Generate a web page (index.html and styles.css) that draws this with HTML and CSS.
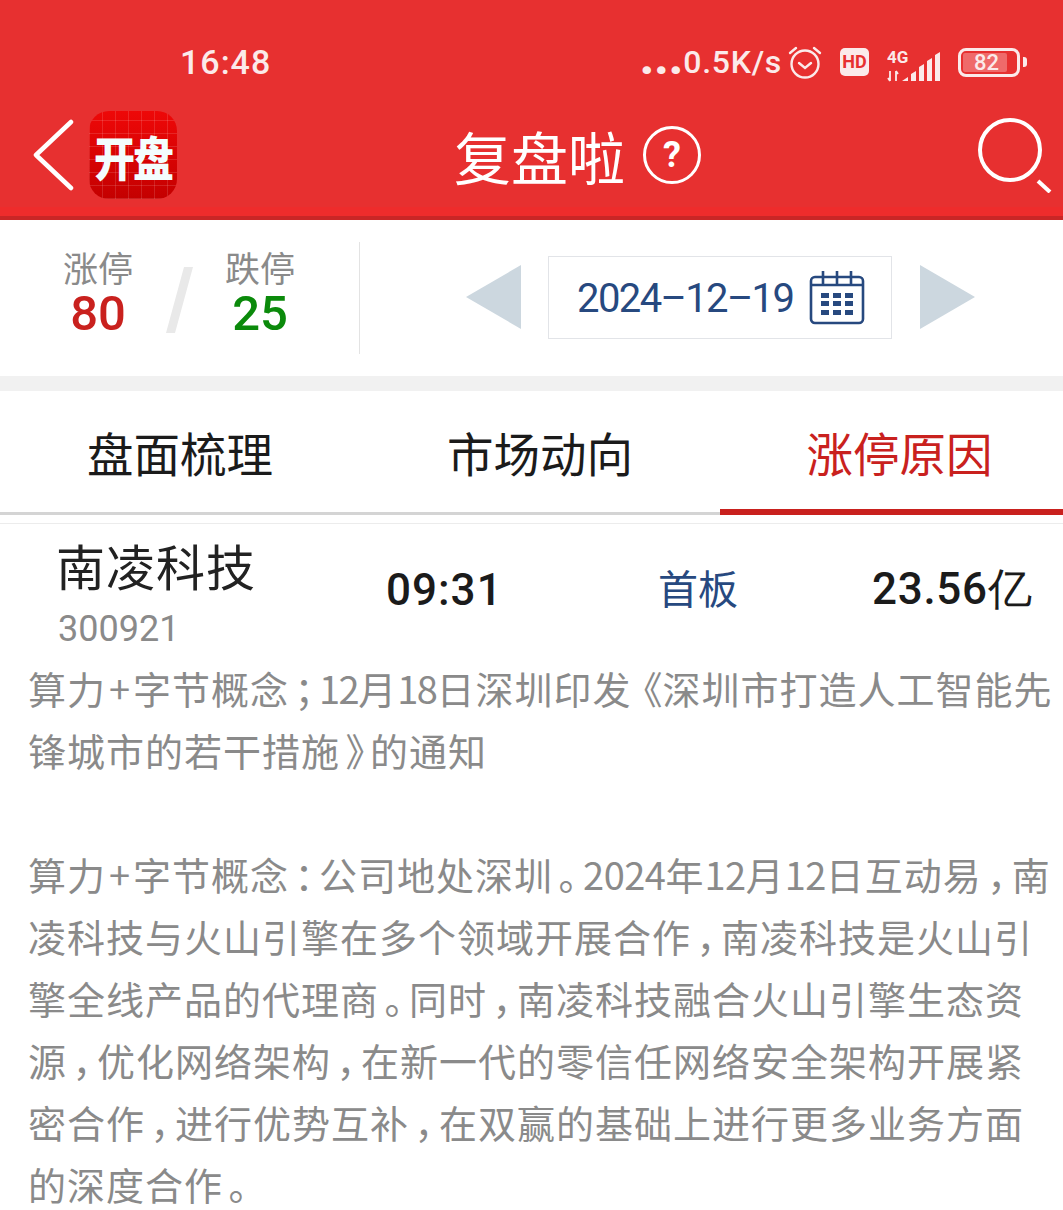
FILE: index.html
```html
<!DOCTYPE html>
<html lang="zh">
<head>
<meta charset="utf-8">
<title>复盘啦</title>
<link rel="stylesheet" href="styles.css">
</head>
<body>
<header class="header">
  <div class="status">
    <span class="time">16:48</span>
    <div class="status-right">
      <span class="dots">...</span><span class="speed">0.5K/s</span>
      <svg class="ic-alarm" width="36" height="36" viewBox="0 0 36 36" fill="none" stroke="#fbeaea" stroke-width="2.4" stroke-linecap="round"><circle cx="18" cy="20" r="13.5"/><path d="M12 19l6 5 6-5M3 9l6-5M33 9l-6-5"/></svg>
      <span class="hd">HD</span>
      <svg class="ic-signal" width="58" height="40" viewBox="0 -6 58 40"><text x="0" y="12" class="sig-text">4G</text><path d="M3 20v10M1 27l2 3M9 30V20M11 23l-2-3" stroke="#fbeaea" stroke-width="1.8" fill="none"/><path d="M15 30l6-4v4zM24 30v-7l5-3v10zM32 30V16l5-3v17zM40 30V10l5-3v23zM48 30V4l5-3v29z" fill="#fbeaea"/></svg>
      <span class="battery"><span class="battery-fill">82</span></span><span class="battery-tip"></span>
    </div>
  </div>
  <div class="nav">
    <div class="nav-left">
      <svg width="42" height="72" viewBox="0 0 42 72" fill="none" stroke="#fff" stroke-width="4.5" stroke-linecap="round" stroke-linejoin="round"><path d="M38 3L3 36l35 33"/></svg>
      <div class="logo"><span>开盘</span></div>
    </div>
    <div class="nav-title">
      <span>复盘啦</span>
      <span class="help">?</span>
    </div>
    <svg class="ic-search" width="76" height="76" viewBox="0 0 76 76" fill="none" stroke="#fff"><circle cx="33" cy="33" r="30" stroke-width="4"/><path d="M61 64l12 11" stroke-width="4"/></svg>
  </div>
</header>

<section class="summary">
  <div class="stats">
    <div class="stat"><span class="stat-label">涨停</span><span class="stat-num up">80</span></div>
    <span class="slash"></span>
    <div class="stat"><span class="stat-label">跌停</span><span class="stat-num down">25</span></div>
  </div>
  <div class="date-picker">
    <span class="arrow arrow-left"></span>
    <div class="date-box">
      <span class="date">2024–12–19</span>
      <svg class="ic-cal" width="56" height="56" viewBox="0 0 56 56" fill="none" stroke="#27497f" stroke-width="2.6"><rect x="2" y="7" width="52" height="46" rx="4"/><path d="M2 15h52M14 1v13M28 1v13M42 1v13"/><g fill="#27497f" stroke="none"><rect x="12" y="23" width="8" height="5"/><rect x="24" y="23" width="8" height="5"/><rect x="36" y="23" width="8" height="5"/><rect x="12" y="31" width="8" height="5"/><rect x="24" y="31" width="8" height="5"/><rect x="36" y="31" width="8" height="5"/><rect x="12" y="40" width="8" height="5"/><rect x="24" y="40" width="8" height="5"/><rect x="36" y="40" width="8" height="5"/></g></svg>
    </div>
    <span class="arrow arrow-right"></span>
  </div>
</section>

<nav class="tabs">
  <div class="tab">盘面梳理</div>
  <div class="tab">市场动向</div>
  <div class="tab active">涨停原因</div>
</nav>

<main class="content">
  <div class="stock-row">
    <div class="stock-name">
      <div class="name">南凌科技</div>
      <div class="code">300921</div>
    </div>
    <div class="stock-time">09:31</div>
    <div class="stock-board">首板</div>
    <div class="stock-amount">23.56亿</div>
  </div>
  <p class="reason">算力<span class="p plus">+</span>字节概念<span class="p">；</span><span class="num tight">12</span>月<span class="num tight">18</span>日深圳印发<span class="p open">《</span>深圳市打造人工智能先锋城市的若干措施<span class="p">》</span>的通知<br><br>算力<span class="p plus">+</span>字节概念<span class="p">：</span>公司地处深圳<span class="p">。</span><span class="num">2024</span>年<span class="num">12</span>月<span class="num">12</span>日互动易<span class="p">，</span>南凌科技与火山引擎在多个领域开展合作<span class="p">，</span>南凌科技是火山引擎全线产品的代理商<span class="p">。</span>同时<span class="p">，</span>南凌科技融合火山引擎生态资源<span class="p">，</span>优化网络架构<span class="p">，</span>在新一代的零信任网络安全架构开展紧密合作<span class="p">，</span>进行优势互补<span class="p">，</span>在双赢的基础上进行更多业务方面的深度合作<span class="p">。</span></p>
</main>
</body>
</html>
```

FILE: styles.css
```css
* { box-sizing: border-box; }
html, body { margin: 0; padding: 0; }
body {
  width: 1063px;
  height: 1210px;
  overflow: hidden;
  background: #fff;
  font-family: "Noto Sans CJK SC", "Roboto", sans-serif;
}
.header {
  height: 220px;
  background: linear-gradient(#e73030 0 207px, #ee2c2c 207px);
  border-bottom: 4px solid #c92626;
  color: #fff;
  display: flex;
  flex-direction: column;
}
.status {
  height: 94px;
  padding: 36px 36px 0 180px;
  display: flex;
  justify-content: space-between;
  align-items: flex-start;
  color: #fbeaea;
}
.time {
  font-family: Roboto, sans-serif;
  font-size: 34px;
  font-weight: 500;
  line-height: 52px;
  letter-spacing: 1px;
}
.status-right {
  display: flex;
  align-items: center;
  height: 52px;
}
.dots {
  font-family: Roboto, sans-serif;
  font-size: 46px;
  font-weight: 900;
  letter-spacing: .5px;
  line-height: 36px;
  margin-top: -8px;
}
.speed {
  font-family: Roboto, sans-serif;
  font-size: 32px;
  font-weight: 500;
  letter-spacing: .7px;
  margin-right: 5px;
}
.hd {
  width: 29px;
  height: 28px;
  margin-left: 17px;
  background: #fbeaea;
  color: #e73030;
  border-radius: 5px;
  font: 700 18px/28px Roboto, sans-serif;
  text-align: center;
}
.ic-signal {
  margin: 6px 0 0 18px;
}
.sig-text {
  font: 700 17px Roboto, sans-serif;
  fill: #fbeaea;
}
.battery {
  width: 62px;
  height: 29px;
  margin-left: 13px;
  border: 3px solid #fbeaea;
  border-radius: 8px;
  padding: 2px;
  display: flex;
}
.battery-fill {
  width: 44px;
  background: #ef6a6a;
  border-radius: 2px;
  font: 500 22px/19px Roboto, sans-serif;
  text-align: center;
  padding-left: 3px;
}
.battery-tip {
  width: 4px;
  height: 10px;
  margin-left: 3px;
  background: #fbeaea;
  border-radius: 0 3px 3px 0;
}
.nav {
  flex: 1;
  display: flex;
  align-items: center;
  justify-content: space-between;
  padding: 0 10px 0 33px;
  position: relative;
}
.nav-left {
  display: flex;
  align-items: center;
  gap: 14px;
}
.logo {
  width: 88px;
  height: 88px;
  border-radius: 20px;
  display: flex;
  align-items: center;
  justify-content: center;
  background:
    repeating-linear-gradient(90deg, rgba(255,255,255,.13) 0 1px, transparent 1px 13px),
    repeating-linear-gradient(0deg, rgba(255,255,255,.13) 0 1px, transparent 1px 13px),
    linear-gradient(#ee0808, #c40000);
}
.logo span {
  display: inline-block;
  font-size: 41px;
  font-weight: 900;
  line-height: 1;
  letter-spacing: -2px;
  color: #f3fdfd;
  transform: scaleY(1.15);
}
.nav-title {
  position: absolute;
  left: 454px;
  top: 21px;
  display: flex;
  align-items: center;
  gap: 18px;
  font-size: 57px;
  line-height: 80px;
}
.help {
  width: 58px;
  height: 58px;
  border: 3.5px solid #fff;
  border-radius: 50%;
  font: 700 36px/52px Roboto, sans-serif;
  text-align: center;
}
.summary {
  height: 156px;
  display: flex;
  align-items: stretch;
  padding: 22px 0 22px;
}
.stats {
  width: 360px;
  height: 112px;
  border-right: 1px solid #e3e3e3;
  padding-left: 63px;
  display: flex;
  align-items: flex-start;
}
.stat {
  width: 70px;
  display: flex;
  flex-direction: column;
  align-items: center;
}
.stat-label {
  font-size: 35px;
  line-height: 50px;
  color: #8a8a8a;
  white-space: nowrap;
}
.stat-num {
  font-family: Roboto, sans-serif;
  font-size: 49px;
  font-weight: 500;
  line-height: 44px;
}
.up { color: #c9211e; }
.down { color: #0b8a0b; }
.slash {
  width: 27px;
  height: 66px;
  margin: 25px 32px 0 33px;
  background: #e9e9e9;
  clip-path: polygon(18px 0, 27px 0, 9px 100%, 0 100%);
}
.date-picker {
  display: flex;
  align-items: center;
  margin-left: 106px;
  height: 84px;
  margin-top: 13px;
}
.arrow {
  width: 55px;
  height: 64px;
  background: #ccd7df;
}
.arrow-left { clip-path: polygon(100% 0, 100% 100%, 0 50%); }
.arrow-right { clip-path: polygon(0 0, 100% 50%, 0 100%); }
.date-box {
  width: 344px;
  height: 83px;
  margin: 0 28px 0 27px;
  border: 1px solid #e2e4e8;
  display: flex;
  align-items: center;
  padding-left: 28px;
  gap: 16px;
  flex: none;
}
.date {
  font-family: Roboto, sans-serif;
  font-size: 40px;
  letter-spacing: -1.6px;
  color: #27497f;
  white-space: nowrap;
  margin-top: 2px;
}
.ic-cal { margin-top: 1px; }
.tabs {
  margin-top: 15px;
  height: 124px;
  display: flex;
  border-bottom: 3px solid #d4d4d4;
  box-shadow: 0 -15px 0 #f1f1f1;
}
.tab {
  flex: 0 0 360px;
  text-align: center;
  font-size: 46.5px;
  line-height: 122px;
  color: #1b1b1b;
}
.tab:nth-child(3) { flex-basis: 343px; padding-left: 16px; }
.tab.active {
  color: #c9211e;
  border-bottom: 6px solid #c9211e;
  height: 124px;
}
.content {
  margin-top: 8px;
  border-top: 1px solid #ececec;
}
.stock-row {
  height: 125px;
  display: flex;
  align-items: center;
  position: relative;
}
.stock-name {
  width: 386px;
  padding-left: 56px;
  padding-top: 14px;
}
.name {
  font-size: 49px;
  line-height: 64px;
  color: #222;
  letter-spacing: 1px;
}
.code {
  font-family: Roboto, sans-serif;
  font-size: 36px;
  line-height: 52px;
  color: #8a8a8a;
  margin: 6px 0 0 2px;
}
.stock-time {
  width: 272px;
  font-family: Roboto, sans-serif;
  font-size: 44px;
  font-weight: 500;
  color: #1b1b1b;
  letter-spacing: 1px;
  margin-top: 6px;
}
.stock-board {
  width: 214px;
  font-size: 40px;
  color: #27497f;
}
.stock-amount {
  font-family: Roboto, sans-serif;
  font-size: 44px;
  font-weight: 500;
  color: #1b1b1b;
  white-space: nowrap;
  letter-spacing: .7px;
  margin-top: 6px;
}
.reason {
  margin: 0;
  padding: 8px 2px 0 28px;
  font-size: 38px;
  line-height: 62px;
  letter-spacing: 1px;
  color: #8a8a8a;
}
.p {
  display: inline-block;
  width: 30px;
  letter-spacing: 0;
  text-align: center;
  font-feature-settings: "halt";
}
.p.plus { width: 27px; }
.p.open { width: 31px; text-align: right; }
.num { letter-spacing: -.5px; }
.num.tight { letter-spacing: -1.5px; }
```
